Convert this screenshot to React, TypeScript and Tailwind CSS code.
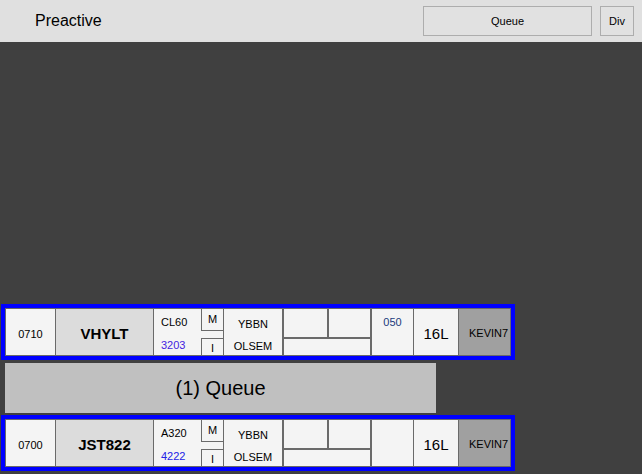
const rows = [
  { time: "0710", call: "VHYLT", type: "CL60", code: "3203", codeColor: "text-[#4322e0]", dep: "YBBN", sid: "OLSEM", alt: "050", rwy: "16L", user: "KEVIN7" },
  { time: "0700", call: "JST822", type: "A320", code: "4222", codeColor: "text-[#2222e6]", dep: "YBBN", sid: "OLSEM", alt: "", rwy: "16L", user: "KEVIN7" },
];

type Strip = (typeof rows)[number];

function FlightStrip({ s }: { s: Strip }) {
  return (
    <div className="w-[514px] h-[56px] ml-[1px] border-4 border-[#0000ff] shrink-0">
      <div className="flex h-full border border-[#6a6a6a] bg-[#f4f4f4] text-[11px] leading-[13px] text-black">
        <div className="w-[50px] flex items-center justify-center pt-[4px] border-r border-[#6a6a6a]">
          {s.time}
        </div>
        <div className="w-[98px] flex items-center justify-center pt-[2px] bg-[#dcdcdc] border-r border-[#6a6a6a] font-bold text-[15px]">
          {s.call}
        </div>
        <div className="w-[70px] flex border-r border-[#6a6a6a]">
          <div className="w-[47px] pl-[7px]">
            <div className="pt-[7px]">{s.type}</div>
            <div className={`mt-[10px] ${s.codeColor}`}>{s.code}</div>
          </div>
          <div className="w-[22px] flex flex-col justify-between">
            <div className="h-[22px] border-l border-b border-[#6a6a6a] text-center pt-[4px]">M</div>
            <div className="h-[17px] border-l border-t border-[#6a6a6a] text-center pt-[3px] overflow-hidden">I</div>
          </div>
        </div>
        <div className="w-[60px] border-r-2 border-[#6a6a6a] text-center overflow-hidden">
          <div className="pt-[9px]">{s.dep}</div>
          <div className="mt-[9px]">{s.sid}</div>
        </div>
        <div className="w-[88px] flex flex-col border-r-2 border-[#6a6a6a]">
          <div className="h-[30px] flex border-b-2 border-[#6a6a6a]">
            <div className="w-[45px] border-r-2 border-[#6a6a6a]" />
            <div className="flex-1" />
          </div>
          <div className="flex-1" />
        </div>
        <div className="w-[42px] border-r border-[#6a6a6a] text-center pt-[7px] text-[#1b3a7c]">{s.alt}</div>
        <div className="w-[45px] flex items-center justify-center pt-[3px] border-r border-[#6a6a6a] text-[15px]">
          {s.rwy}
        </div>
        <div className="w-[51px] flex items-center pl-[10px] pt-[2px] bg-[#a0a0a0]">{s.user}</div>
      </div>
    </div>
  );
}

export default function App() {
  return (
    <div className="w-[642px] h-[474px] flex flex-col font-['Liberation_Sans',Arial,sans-serif] overflow-hidden">
      <div className="h-[42px] shrink-0 flex items-center bg-[#e0e0e0]">
        <span className="pl-[35px] text-[16px] text-black">Preactive</span>
        <button className="ml-auto w-[169px] h-[30px] bg-[#e1e1e1] border border-[#adadad] text-[11px] text-black">
          Queue
        </button>
        <button className="ml-[8px] mr-[8px] w-[34px] h-[30px] bg-[#e1e1e1] border border-[#adadad] text-[11px] text-black">
          Div
        </button>
      </div>
      <div className="flex-1 bg-[#404040] flex flex-col justify-end pb-[3px]">
        <FlightStrip s={rows[0]} />
        <div className="mt-[3px] ml-[5px] w-[431px] h-[50px] shrink-0 bg-[#c0c0c0] flex items-center justify-center text-[20px] text-black">
          (1) Queue
        </div>
        <div className="mt-[2px]">
          <FlightStrip s={rows[1]} />
        </div>
      </div>
    </div>
  );
}
